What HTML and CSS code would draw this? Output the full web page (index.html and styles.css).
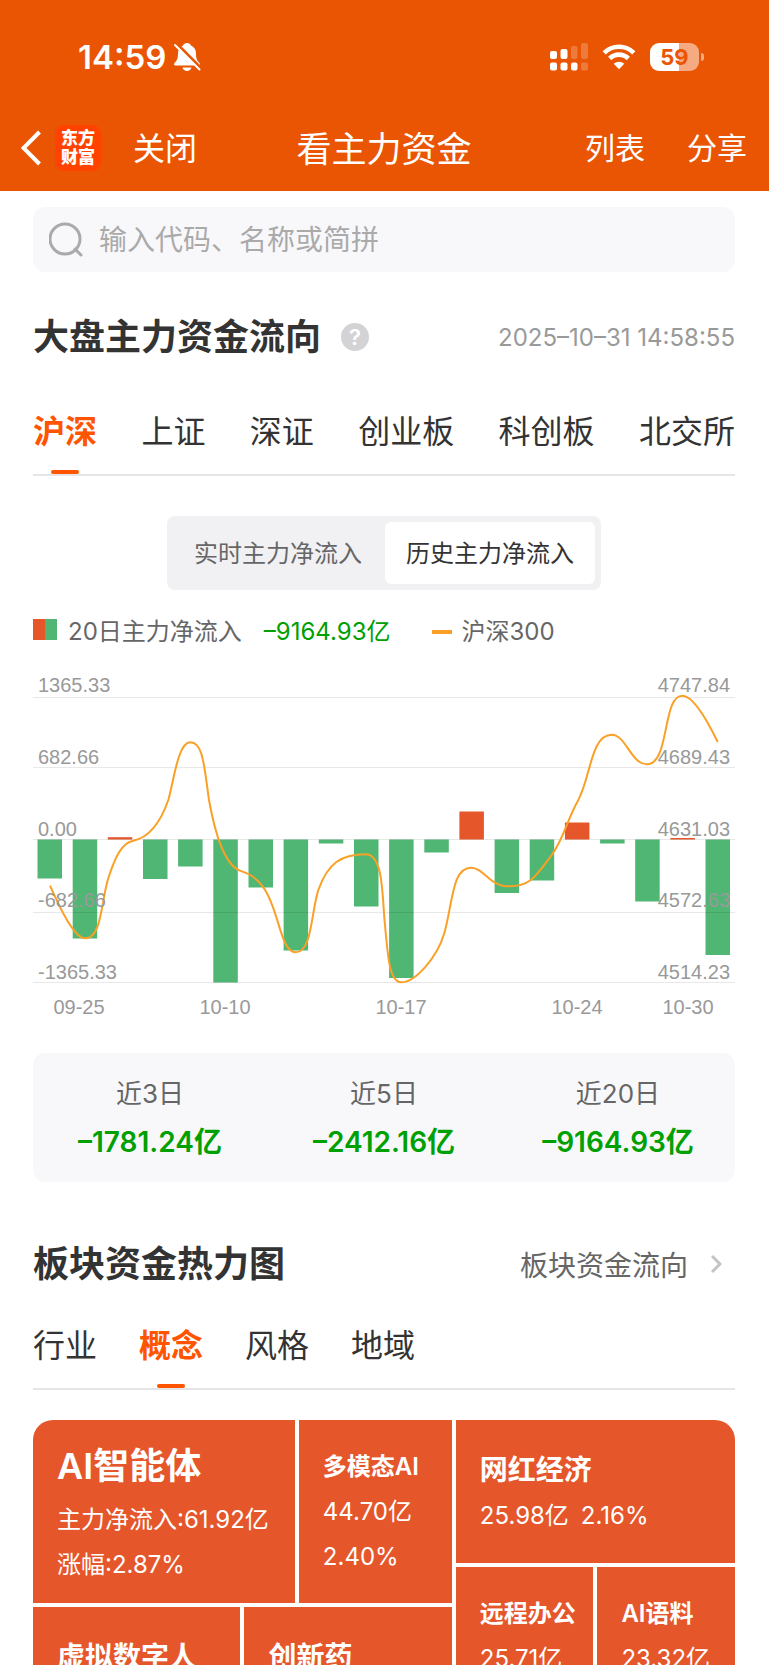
FILE: index.html
```html
<!DOCTYPE html>
<html lang="zh-CN">
<head>
    <meta charset="UTF-8">
    <meta name="viewport" content="width=device-width, initial-scale=1.0">
    <title>看主力资金</title>
    <link rel="stylesheet" href="styles.css">
</head>
<body>
    <header class="header">
        <div class="status">
            <span class="time">14:59</span>
            <svg class="bell" width="28" height="30" viewBox="0 0 28 30">
                <path fill="#fff" d="M14 1c2 0 3.500 1 4 2.500C21.500 5 23 8 23 11.500c0 5 1 7 3.500 9.500 1 1.200.5 2.500-1 2.500h-23c-1.500 0-2-1.300-1-2.500C4 18.500 5 16.500 5 11.500 5 8 6.500 5 10 3.500 10.500 2 12 1 14 1zM9.500 25.500h9c-.5 2.200-2.300 3.500-4.500 3.500s-4-1.300-4.500-3.500z"/>
                <path stroke="#ea5504" stroke-width="3" d="M3.500 1.500L28 26"/>
                <path stroke="#fff" stroke-width="2" stroke-linecap="round" d="M2 3l24.500 24.500"/>
            </svg>
            <div class="status-right">
                <svg width="38" height="28" viewBox="0 0 38 28" fill="#fff">
                    <rect x="0" y="8" width="7" height="8" rx="2"/>
                    <rect x="10.500" y="6" width="7" height="10" rx="2"/>
                    <rect x="21" y="3" width="6.500" height="13" rx="2" opacity=".22"/>
                    <rect x="31" y="0" width="7" height="16" rx="2" opacity=".22"/>
                    <rect x="0" y="19.500" width="7" height="8" rx="2"/>
                    <rect x="10.500" y="19.500" width="7" height="8" rx="2"/>
                    <rect x="21" y="19.500" width="6.500" height="8" rx="2"/>
                    <rect x="31" y="19.500" width="7" height="8" rx="2" opacity=".22"/>
                </svg>
                <svg width="34" height="26" viewBox="0 0 34 26" fill="none" stroke="#fff" stroke-width="4.600">
                    <path d="M2.200 8.900a21 21 0 0 1 29.600 0"/>
                    <path d="M7.700 14.500a13.200 13.200 0 0 1 18.600 0"/>
                    <path fill="#fff" stroke="none" d="M17 25.200l-5.300-5.400a7.600 7.600 0 0 1 10.600 0z"/>
                </svg>
                <div class="battery"><span>59</span></div>
            </div>
        </div>
        <nav class="nav">
            <div class="nav-left">
                <button class="back" aria-label="返回">
                    <svg width="20" height="36" viewBox="0 0 20 36" fill="none" stroke="#fff" stroke-width="4"><path d="M18.500 2L2.500 18l16 16"/></svg>
                </button>
                <div class="logo"><span>东方</span><span>财富</span></div>
                <button class="close">关闭</button>
            </div>
            <h1>看主力资金</h1>
            <div class="nav-right">
                <button>列表</button>
                <button>分享</button>
            </div>
        </nav>
    </header>

    <main class="main">
        <label class="search">
            <svg width="36" height="36" viewBox="0 0 36 36" fill="none" stroke="#aaa" stroke-width="3"><circle cx="16" cy="17" r="15"/><path d="M26 27l6 6" stroke-linecap="round"/></svg>
            <input type="text" placeholder="输入代码、名称或简拼" aria-label="搜索">
        </label>

        <div class="section-head">
            <h2>大盘主力资金流向</h2>
            <button class="help">?</button>
            <span class="date">2025–10–31 14:58:55</span>
        </div>
        <div class="tabs tabs-wide">
            <button class="active">沪深</button>
            <button>上证</button>
            <button>深证</button>
            <button>创业板</button>
            <button>科创板</button>
            <button>北交所</button>
        </div>

        <div class="switch">
            <button>实时主力净流入</button>
            <button class="on">历史主力净流入</button>
        </div>

        <div class="legend">
            <i class="swatch"></i>
            <span>20日主力净流入</span>
            <span class="total">–9164.93亿</span>
            <i class="dash"></i>
            <span>沪深300</span>
        </div>

        <svg class="chart" viewBox="0 0 702 360">
            <g class="up">
                <rect x="74.800" y="167.200" width="24.500" height="2.300"/>
                <rect x="426.400" y="141.500" width="24.500" height="28"/>
                <rect x="531.900" y="152.500" width="24.500" height="17"/>
                <rect x="637.400" y="168" width="24.500" height="1.500"/>
            </g>
            <g class="down">
                <rect x="4.500" y="169.500" width="24.500" height="39"/>
                <rect x="39.700" y="169.500" width="24.500" height="99"/>
                <rect x="110" y="169.500" width="24.500" height="39.500"/>
                <rect x="145.100" y="169.500" width="24.500" height="27"/>
                <rect x="180.300" y="169.500" width="24.500" height="143"/>
                <rect x="215.500" y="169.500" width="24.500" height="48"/>
                <rect x="250.600" y="169.500" width="24.500" height="111"/>
                <rect x="285.800" y="169.500" width="24.500" height="4"/>
                <rect x="321" y="169.500" width="24.500" height="67"/>
                <rect x="356.100" y="169.500" width="24.500" height="138.500"/>
                <rect x="391.300" y="169.500" width="24.500" height="13"/>
                <rect x="461.600" y="169.500" width="24.500" height="53.500"/>
                <rect x="496.700" y="169.500" width="24.500" height="41"/>
                <rect x="567.100" y="169.500" width="24.500" height="4"/>
                <rect x="602.200" y="169.500" width="24.500" height="62"/>
                <rect x="672.500" y="169.500" width="24.500" height="115.500"/>
            </g>
            <path class="grid" d="M0 27.500h702M0 97.500h702M0 169.500h702M0 242.500h702M0 312.500h702"/>
            <path class="line" d="M17 215.700C27 238 41 268.300 52 268.300C69 268.300 68 231 75.300 208.300C82 187 89 172.500 100.300 170.700C118 167 128 151 135.300 130C141 110 145 72.300 157.300 72.300C170 72.300 171 95 176 130C181 158 190 191 204.300 199.300C212 203.500 220 203 230.300 217.300C246 238 247 282.300 262.700 282.300C279 282.300 278 243 285.300 220C295 193 308 184.300 332.700 184.300C351 184.300 349 228 352 255C355 290 357 312.300 368.300 312.300C382 312.300 404 288 411.300 263.300C420 232 419 197.700 438 197.700C451 197.700 456 216.300 476 216.300C498 216.300 503 206 518.700 185C531 168 534 150 545.300 130C558 106 558 64.700 578.700 64.700C593 64.700 598 94.300 614 94.300C637 94.300 629 25.700 649.300 25.700C661 25.700 676 54 684.700 72"/>
            <g class="axis">
                <text x="5" y="22">1365.33</text>
                <text x="5" y="94">682.66</text>
                <text x="5" y="166">0.00</text>
                <text x="5" y="237">-682.66</text>
                <text x="5" y="309">-1365.33</text>
            </g>
            <g class="axis" text-anchor="end">
                <text x="697" y="22">4747.84</text>
                <text x="697" y="94">4689.43</text>
                <text x="697" y="166">4631.03</text>
                <text x="697" y="237">4572.63</text>
                <text x="697" y="309">4514.23</text>
            </g>
            <g class="axis" text-anchor="middle">
                <text x="46" y="344">09-25</text>
                <text x="192" y="344">10-10</text>
                <text x="368" y="344">10-17</text>
                <text x="544" y="344">10-24</text>
                <text x="655" y="344">10-30</text>
            </g>
        </svg>

        <div class="summary">
            <div><span>近3日</span><strong>–1781.24亿</strong></div>
            <div><span>近5日</span><strong>–2412.16亿</strong></div>
            <div><span>近20日</span><strong>–9164.93亿</strong></div>
        </div>

        <div class="section-head head-heat">
            <h2>板块资金热力图</h2>
            <a href="#" class="more">板块资金流向
                <svg width="12" height="20" viewBox="0 0 12 20" fill="none" stroke="#c4c4c4" stroke-width="3"><path d="M2 2l8 8-8 8"/></svg>
            </a>
        </div>
        <div class="tabs tabs-heat">
            <button>行业</button>
            <button class="active">概念</button>
            <button>风格</button>
            <button>地域</button>
        </div>

        <div class="heatmap">
            <div class="col col-left">
                <div class="row row-one">
                    <div class="cell big"><h3>AI智能体</h3><p>主力净流入:61.92亿</p><p>涨幅:2.87%</p></div>
                    <div class="cell"><h3>多模态AI</h3><p>44.70亿</p><p>2.40%</p></div>
                </div>
                <div class="row row-two">
                    <div class="cell mid"><h3>虚拟数字人</h3></div>
                    <div class="cell mid"><h3>创新药</h3></div>
                </div>
            </div>
            <div class="col col-right">
                <div class="cell mid top"><h3>网红经济</h3><p><span>25.98亿</span><span>2.16%</span></p></div>
                <div class="row row-two">
                    <div class="cell"><h3>远程办公</h3><p>25.71亿</p></div>
                    <div class="cell"><h3>AI语料</h3><p>23.32亿</p></div>
                </div>
            </div>
        </div>
    </main>
</body>
</html>
```

FILE: styles.css
```css
* { box-sizing: border-box; margin: 0; padding: 0; }
body { font-family: Inter, "Noto Sans CJK SC", sans-serif; background: #fff; color: #333; height: 100vh; display: flex; flex-direction: column; overflow: hidden; }
button { font: inherit; color: inherit; background: none; border: none; cursor: pointer; white-space: nowrap; }
svg { display: block; flex: none; }

/* header */
.header { background: #ea5504; color: #fff; padding-bottom: 9px; }
.status { height: 114px; padding: 0 65px 0 78px; display: flex; align-items: center; }
.time { font-size: 33px; font-weight: 600; }
.bell { margin-left: 7px; }
.status-right { margin-left: auto; display: flex; align-items: center; gap: 14px; }
.battery { position: relative; width: 49px; height: 28px; margin-right: 5px; border-radius: 9px; background: linear-gradient(to right, #fff 59%, #f5aa82 59%); color: #ea5504; font-size: 22px; font-weight: 700; line-height: 28px; text-align: center; }
.battery::after { content: ""; position: absolute; left: 51px; top: 10px; width: 3px; height: 8px; border-radius: 0 3px 3px 0; background: #f5aa82; }
.nav { height: 68px; padding: 0 22px 0 21px; display: grid; grid-template-columns: 1fr auto 1fr; align-items: center; }
.nav h1 { padding-bottom: 4px; font-size: 35px; font-weight: 400; }
.nav-left { display: flex; align-items: center; }
.logo { width: 46px; height: 46px; margin: 0 32px 0 14px; border-radius: 9px; background: #ff4200; display: flex; flex-direction: column; justify-content: center; align-items: center; font-size: 17px; font-weight: 900; line-height: 19px; }
.close { padding-bottom: 4px; font-size: 32px; }
.nav-right { padding-bottom: 4px; display: flex; justify-content: flex-end; gap: 42px; font-size: 30px; }

.main { flex: 1; min-height: 0; padding: 16px 34px 0 33px; display: flex; flex-direction: column; }
.main > * { flex: none; }

.search { height: 65px; padding: 0 16px; border-radius: 12px; background: #f8f8fb; display: flex; align-items: center; gap: 14px; }
.search input { flex: 1; min-width: 0; border: none; outline: none; background: none; font: inherit; font-size: 28px; color: #333; }
.search input::placeholder { color: #aaa; }

.section-head { height: 50px; margin-top: 40px; display: flex; align-items: center; }
.section-head h2 { font-size: 36px; font-weight: 700; line-height: 50px; }
.help { width: 28px; height: 28px; margin-left: 20px; border-radius: 50%; background: #d3d3d5; color: #fff; font-size: 22px; font-weight: 600; line-height: 28px; }
.date { margin-left: auto; font-size: 24px; color: #999; }
.head-heat { margin-top: 57px; }
.more { margin-left: auto; padding-right: 13px; display: flex; align-items: center; gap: 22px; font-size: 28px; color: #666; text-decoration: none; }

.tabs { margin-top: 24px; display: flex; border-bottom: 2px solid #e5e5e7; font-size: 32px; line-height: 84px; }
.tabs button { padding-top: 4px; }
.tabs-wide { justify-content: space-between; }
.tabs-heat { margin-top: 11px; gap: 42px; }
.tabs .active { position: relative; color: #ff5400; font-weight: 700; }
.tabs .active::after { content: ""; position: absolute; left: 50%; bottom: 0; width: 28px; height: 4px; margin-left: -14px; border-radius: 2px; background: #ff5400; }

.switch { align-self: center; margin-top: 40px; height: 74px; padding: 6px; border-radius: 8px; background: #f1f1f4; display: flex; gap: 2px; font-size: 24px; color: #666; }
.switch button { padding: 0 21px 4px; border-radius: 6px; }
.switch .on { background: #fff; color: #333; }

.legend { margin-top: 27px; height: 30px; display: flex; align-items: center; font-size: 24px; line-height: 30px; color: #666; }
.swatch { align-self: flex-start; width: 24px; height: 21px; margin: 2px 11px 0 0; background: linear-gradient(to right, #e6562b 50%, #50b674 50%); }
.total { margin: 0 42px 0 22px; color: #00a000; }
.dash { width: 20px; height: 4px; margin-right: 9px; background: #faa026; }

.chart { width: 100%; height: auto; margin: 23px 0; }
.up { fill: #e6562b; }
.down { fill: #50b674; }
.grid { stroke: rgba(0, 0, 0, 0.09); }
.line { fill: none; stroke: #faa026; stroke-width: 2; }
.axis { fill: #999; font-family: "Liberation Sans", Arial, sans-serif; font-size: 20px; }

.summary { height: 129px; border-radius: 12px; background: #f8f8fb; display: grid; grid-template-columns: repeat(3, 1fr); align-content: center; text-align: center; }
.summary span { display: block; font-size: 26px; line-height: 48px; color: #666; }
.summary strong { display: block; font-size: 28px; font-weight: 600; line-height: 48px; color: #00a000; }

/* heatmap runs past the bottom of the screen */
.main > .heatmap { flex: 1; min-height: 0; }
.heatmap { margin-top: 30px; display: grid; grid-template-columns: 3fr 2fr; gap: 4px; border-radius: 20px 20px 0 0; overflow: hidden; color: #fff; }
.col { display: flex; flex-direction: column; gap: 4px; min-width: 0; min-height: 0; }
.row { display: grid; gap: 4px; min-height: 0; }
.row-one { height: 183px; flex: none; grid-template-columns: 262fr 153fr; }
.row-two { flex: 1; grid-template-columns: 1fr 1fr; }
.cell { padding: 24px 0 0 24px; background: #e6562b; overflow: hidden; white-space: nowrap; font-size: 24px; line-height: 45px; }
.cell h3 { font-size: 24px; font-weight: 600; }
.mid { padding-top: 27px; line-height: 46px; }
.mid h3 { font-size: 28px; }
.big h3 { font-size: 36px; margin-bottom: 8px; }
.top { height: 143px; flex: none; }
.top span { margin-right: 12px; }
```
